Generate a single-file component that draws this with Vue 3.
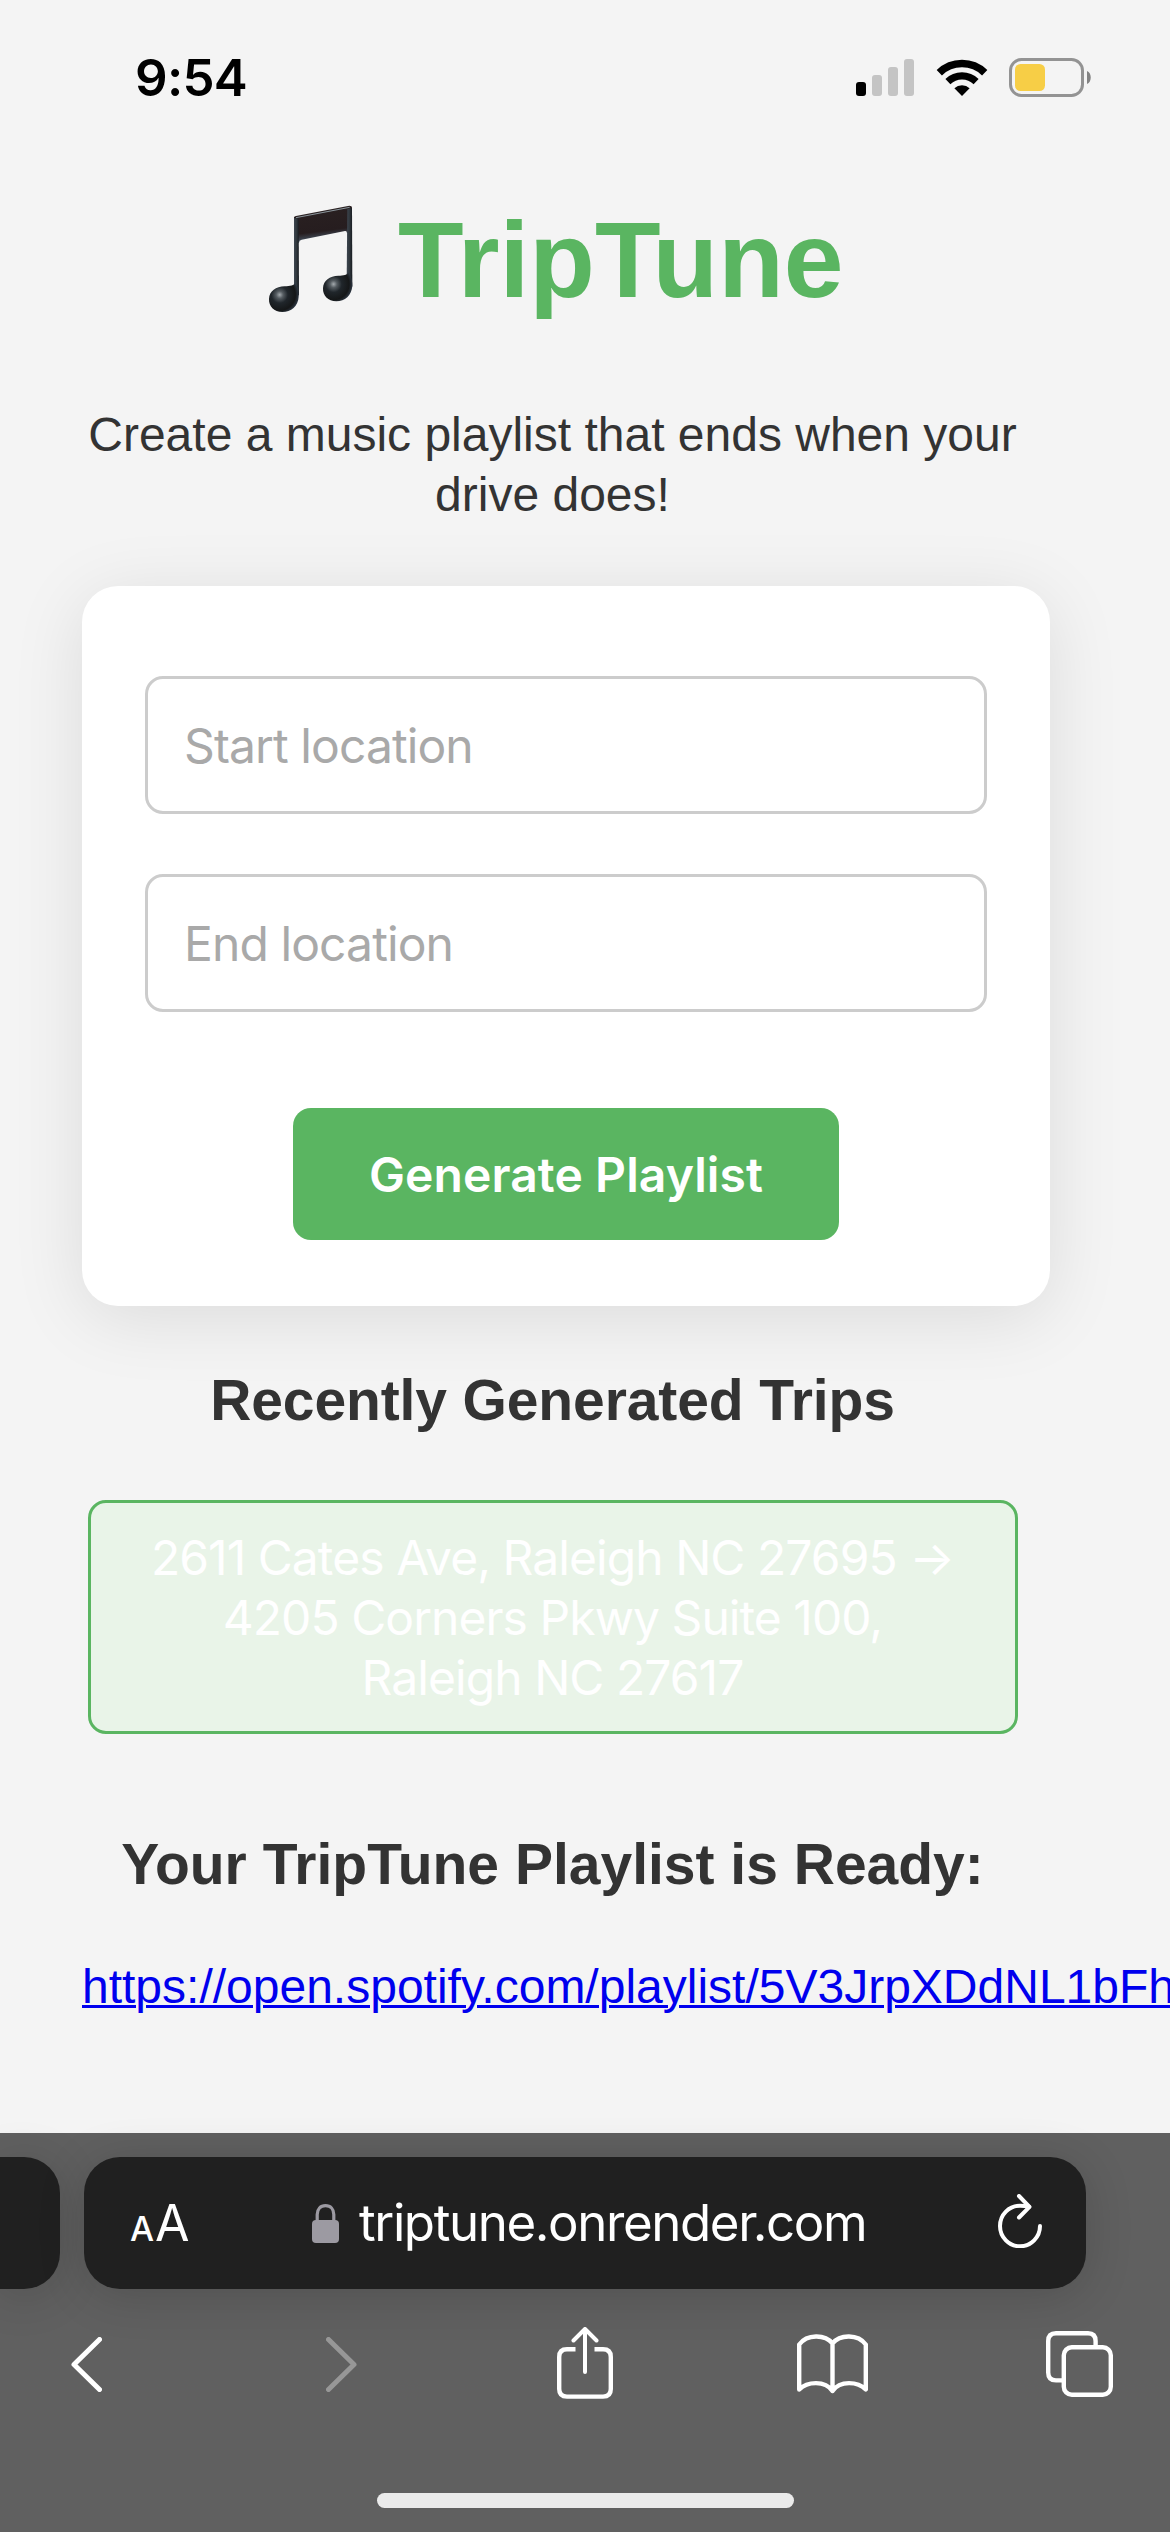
<script setup>
import { ref } from 'vue'

const start = ref('')
const end = ref('')
const playlistUrl = 'https://open.spotify.com/playlist/5V3JrpXDdNL1bFh'
</script>

<template>
  <div class="screen">
    <header class="status">
      <span class="time">9:54</span>
      <div class="indicators">
        <svg class="signal" width="58" height="37" viewBox="0 0 58 37">
          <rect x="0" y="23" width="10" height="14" rx="3" fill="#000" />
          <rect x="16" y="16" width="10" height="21" rx="3" fill="#c4c4c4" />
          <rect x="32" y="8" width="10" height="29" rx="3" fill="#c4c4c4" />
          <rect x="48" y="0" width="10" height="37" rx="3" fill="#c4c4c4" />
        </svg>
        <svg class="wifi" width="52" height="37" viewBox="0 0 52 37">
          <g fill="none" stroke="#000">
            <path d="M3.3 13.7A32.7 32.7 0 0 1 48.7 13.7" stroke-width="7.6" />
            <path d="M11.9 22.6A20.3 20.3 0 0 1 40.1 22.6" stroke-width="7.2" />
          </g>
          <path d="M26 37L18.4 29.3A11 11 0 0 1 33.6 29.3Z" />
        </svg>
        <svg class="battery" width="83" height="39" viewBox="0 0 83 39">
          <rect x="1.5" y="1.5" width="72" height="36" rx="11" fill="none" stroke="#939393" stroke-width="3" />
          <rect x="6" y="6" width="30" height="27" rx="5.5" fill="#f7ce46" />
          <path d="M78 13C83 15 83 24 78 26Z" fill="#838383" />
        </svg>
      </div>
    </header>

    <main class="page">
      <h1>
        <svg class="note" width="85" height="108" viewBox="55 45 255 324">
          <defs>
            <linearGradient id="beam" x1="0" y1="0" x2="0.2" y2="1">
              <stop offset="0" stop-color="#3a3536" />
              <stop offset="0.2" stop-color="#292021" />
              <stop offset="0.75" stop-color="#261d1f" />
              <stop offset="1" stop-color="#4a5b6c" />
            </linearGradient>
            <linearGradient id="stem">
              <stop offset="0" stop-color="#3d4650" />
              <stop offset="0.5" stop-color="#30373d" />
              <stop offset="1" stop-color="#171b20" />
            </linearGradient>
            <radialGradient id="head" cx="0.36" cy="0.42" r="0.66">
              <stop offset="0" stop-color="#a4aaae" />
              <stop offset="0.18" stop-color="#555c61" />
              <stop offset="0.42" stop-color="#20262b" />
              <stop offset="0.8" stop-color="#151718" />
              <stop offset="1" stop-color="#303b48" />
            </radialGradient>
          </defs>
          <path d="M133 82Q134 79 139 78L299 47Q307 47 307 54L304 128L292 130Q292 122 286 123L156 149Q148 151 148 158L133 158Z" fill="url(#beam)" />
          <path d="M133 84L147 86L148 318L133 300Z" fill="url(#stem)" />
          <path d="M293 58L307 54L308 290L291 270Z" fill="url(#stem)" />
          <path d="M138 277C138 289 148 292 147 320C146 348 124 366 98 366C73 366 57 349 58 327C59 303 79 290 105 289C121 289 134 287 138 277Z" fill="url(#head)" />
          <path d="M297 245C298 257 309 262 308 288C306 316 286 334 260 334C235 334 219 317 220 295C221 271 240 258 266 257C281 257 294 255 297 245Z" fill="url(#head)" />
          <path d="M139 83L300 52" fill="none" stroke="#9fadb5" stroke-width="2.5" />
        </svg>
        <span>TripTune</span>
      </h1>

      <p class="tagline">Create a music playlist that ends when your drive does!</p>

      <form class="card" @submit.prevent>
        <input v-model="start" type="text" placeholder="Start location" />
        <input v-model="end" type="text" placeholder="End location" />
        <button class="generate" type="submit">Generate Playlist</button>
      </form>

      <h2 class="recent-title">Recently Generated Trips</h2>
      <button class="trip" type="button">
        <span>2611 Cates Ave, Raleigh NC 27695 →</span>
        <span>4205 Corners Pkwy Suite 100,</span>
        <span>Raleigh NC 27617</span>
      </button>

      <h2 class="ready-title">Your TripTune Playlist is Ready:</h2>
      <a class="link" href="#">{{ playlistUrl }}</a>
    </main>

    <footer class="browser">
      <div class="tabs">
        <div class="pill previous"></div>
        <div class="pill address">
          <span class="text-size"><span class="small">A</span><span class="big">A</span></span>
          <div class="site">
            <svg width="27" height="39" viewBox="0 0 27 39">
              <path d="M5.2 18V10.5C5.2 5 8.5 1.6 13.5 1.6S21.8 5 21.8 10.5V18" fill="none" stroke="#9c9aa2" stroke-width="3.2" />
              <rect y="16" width="27" height="23" rx="4" fill="#9c9aa2" />
            </svg>
            <span class="host">triptune.onrender.com</span>
          </div>
          <svg class="reload" width="44" height="54" viewBox="0 0 44 54" fill="none" stroke="#fff" stroke-width="4" stroke-linecap="round" stroke-linejoin="round">
            <path d="M42 32A20 20.3 0 1 1 22 11.7Q27 11.7 31 12.8" />
            <path d="M21 2L31.5 12.8L21 23.5" />
          </svg>
        </div>
      </div>

      <nav class="tools">
        <svg class="back" width="31" height="55" viewBox="0 0 31 55" fill="none" stroke="#fff" stroke-width="5" stroke-linecap="round" stroke-linejoin="round"><path d="M28.5 2.5L3 27.5L28.5 52.5" /></svg>
        <svg class="forward" width="31" height="55" viewBox="0 0 31 55" fill="none" stroke="#979797" stroke-width="5" stroke-linecap="round" stroke-linejoin="round"><path d="M2.5 2.5L28 27.5L2.5 52.5" /></svg>
        <svg class="share" width="56" height="72" viewBox="0 0 56 72" fill="none" stroke="#fff" stroke-width="4.4">
          <path d="M18.5 22.3H10Q2.2 22.3 2.2 30V62Q2.2 69.6 10 69.6H46Q53.8 69.6 53.8 62V30Q53.8 22.3 46 22.3H37.5" />
          <path d="M28 45V2.5M16.5 13.5L28 2L39.5 13.5" stroke-width="4" stroke-linecap="round" stroke-linejoin="round" />
        </svg>
        <svg class="bookmarks" width="71" height="60" viewBox="0 0 71 60" fill="none" stroke="#fff" stroke-width="4.4" stroke-linecap="round" stroke-linejoin="round">
          <path d="M35.5 9.5C28 0 10 0 2.2 10.5V55.5C10 47.5 28 46 35.5 57C43 46 61 47.5 68.8 55.5V10.5C61 0 43 0 35.5 9.5V57" />
        </svg>
        <svg class="overview" width="67" height="66" viewBox="0 0 67 66" fill="none" stroke="#fff" stroke-width="4.4">
          <path d="M16 49.4H10Q2.2 49.4 2.2 41.6V10Q2.2 2.2 10 2.2H42Q49.6 2.2 49.6 10V15" />
          <rect x="17.8" y="16.3" width="47" height="47.4" rx="8" />
        </svg>
      </nav>
      <div class="home"></div>
    </footer>
  </div>
</template>

<style>
body {
  margin: 0;
  background: #f4f4f4;
}
</style>

<style scoped>
.screen {
  display: flex;
  flex-direction: column;
  width: 1170px;
  height: 2532px;
  overflow: hidden;
  background: #f4f4f4;
  color: #333;
  font-family: Arial, "Liberation Sans", sans-serif;
  font-size: 48px;
  line-height: 60px;
}

svg {
  display: block;
  flex: none;
}

.status {
  display: flex;
  flex: none;
  justify-content: space-between;
  align-items: center;
  box-sizing: border-box;
  height: 155px;
  padding: 0 78px 0 135px;
}

.time {
  color: #000;
  font: 600 51px/60px Inter, sans-serif;
  letter-spacing: -0.7px;
}

.indicators {
  display: flex;
  align-items: center;
}

.wifi {
  margin: 0 21px 0 22px;
}

.page {
  display: flex;
  flex: none;
  flex-direction: column;
  box-sizing: border-box;
  width: 1105px;
  height: 1978px;
  padding: 45px 82px 0;
}

h1 {
  display: flex;
  align-items: flex-start;
  margin: 0;
  padding-left: 186px;
  color: #5ab561;
  font-size: 107.4px;
  line-height: 120px;
  height: 120px;
}

.note {
  margin: 5px 45px 0 0;
}

.tagline {
  margin: 85px 0 61px;
  text-align: center;
}

.card {
  display: flex;
  flex-direction: column;
  align-items: center;
  box-sizing: border-box;
  width: 968px;
  height: 720px;
  padding: 90px 63px 66px;
  border-radius: 36px;
  background: #fff;
  box-shadow: 0 12px 72px rgba(0, 0, 0, 0.1);
}

input {
  box-sizing: border-box;
  width: 842px;
  height: 138px;
  margin: 0 0 60px;
  padding: 0 36px;
  border: 3px solid #ccc;
  border-radius: 18px;
  background: #fff;
  font: 400 48px Inter, sans-serif;
  letter-spacing: -0.9px;
}

input::placeholder {
  color: #a9a9a9;
  opacity: 1;
}

.generate {
  width: 546px;
  height: 132px;
  margin: 36px 0 0;
  padding: 0;
  border: 0;
  border-radius: 18px;
  background: #5ab561;
  color: #fff;
  font: 600 48px Inter, sans-serif;
  letter-spacing: 0.1px;
  white-space: nowrap;
}

h2 {
  margin: 0;
  font-size: 57px;
  line-height: 66px;
  text-align: center;
  white-space: nowrap;
}

.recent-title {
  margin-top: 61px;
  letter-spacing: -0.12px;
}

.trip {
  display: flex;
  flex-direction: column;
  align-items: center;
  align-self: center;
  box-sizing: border-box;
  width: 930px;
  height: 234px;
  margin: 67px 0 97px;
  padding: 25px 0 23px;
  border: 3px solid #5ab561;
  border-radius: 18px;
  background: #e9f4e8;
  color: #fff;
  font: 400 48px/60px Inter, sans-serif;
  letter-spacing: -0.95px;
  white-space: nowrap;
}

.link {
  margin-top: 60px;
  color: #00e;
  text-decoration: underline;
  text-decoration-thickness: 3px;
  white-space: nowrap;
}

.browser {
  display: flex;
  flex: none;
  flex-direction: column;
  box-sizing: border-box;
  height: 399px;
  padding-top: 24px;
  background: #606060;
}

.tabs {
  display: flex;
  gap: 24px;
  height: 132px;
}

.pill {
  background: #202020;
  box-shadow: 0 6px 48px rgba(0, 0, 0, 0.16);
}

.previous {
  width: 60px;
  border-radius: 0 36px 36px 0;
}

.address {
  display: flex;
  align-items: center;
  box-sizing: border-box;
  width: 1002px;
  padding: 0 44px 0 46px;
  border-radius: 36px;
  color: #fff;
  font-family: Inter, sans-serif;
}

.text-size {
  display: flex;
  align-items: baseline;
  gap: 1px;
  width: 182px;
  margin-top: 6px;
}

.small {
  font-size: 34px;
  font-weight: 500;
}

.big {
  font-size: 50px;
}

.site {
  display: flex;
  align-items: center;
  gap: 20px;
}

.host {
  font-size: 51px;
  letter-spacing: -1.4px;
}

.reload {
  margin: -4px 0 0 auto;
}

.tools {
  display: flex;
  align-items: center;
  height: 150px;
  padding-left: 71px;
}

.forward {
  margin-left: 224px;
}

.share {
  margin: -3px 0 0 200px;
}

.bookmarks {
  margin-left: 184px;
}

.overview {
  margin-left: 178px;
}

.home {
  width: 417px;
  height: 15px;
  margin: 54px auto 0 377px;
  border-radius: 8px;
  background: #ebebeb;
}
</style>
